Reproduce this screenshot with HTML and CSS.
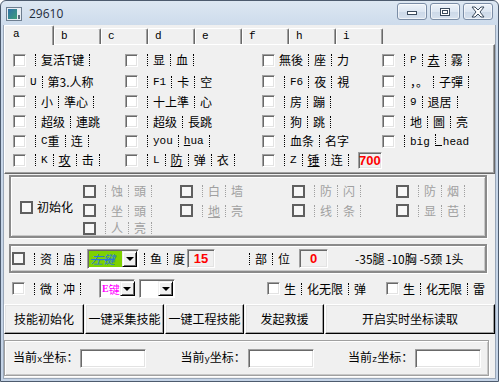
FILE: index.html
```html
<!DOCTYPE html>
<html>
<head>
<meta charset="utf-8">
<link rel="stylesheet" href="styles.css">
</head>
<body>
<div class="win">
  <div class="titlebar">
    <svg class="appicon" width="16" height="14" viewBox="0 0 16 14">
      <defs><linearGradient id="ig" x1="0" y1="0" x2="1" y2="1"><stop offset="0" stop-color="#2f6fa8"/><stop offset="1" stop-color="#3fa07a"/></linearGradient></defs>
      <rect x="0.5" y="0.5" width="15" height="13" fill="#e8eef4" stroke="#6d7d8f"/>
      <rect x="2" y="2" width="9" height="10" fill="url(#ig)"/>
      <rect x="12" y="8" width="2" height="4" fill="#5b6b7c"/>
    </svg>
    <span class="title">29610</span>
    <div class="ctrls">
      <div class="cb"><svg width="12" height="8" viewBox="0 0 12 8"><rect x="1.5" y="3.5" width="9" height="3" fill="#fff" stroke="#3b4a5c"/></svg></div>
      <div class="cb"><svg width="12" height="10" viewBox="0 0 12 10"><rect x="1.5" y="1.5" width="9" height="7" fill="#fff" stroke="#3b4a5c"/><rect x="3.5" y="3.5" width="5" height="3" fill="none" stroke="#3b4a5c"/></svg></div>
      <div class="cb"><svg width="16" height="12" viewBox="0 0 16 12"><path d="M2 1 H5 L8 4 L11 1 H14 L10 6 L14 11 H11 L8 8 L5 11 H2 L6 6 Z" fill="#fff" stroke="#3b4a5c" stroke-linejoin="round"/></svg></div>
    </div>
  </div>
  <div class="client">
    <div class="tabs">
      <div class="tab sel">a</div>
      <div class="tab">b</div>
      <div class="tab">c</div>
      <div class="tab">d</div>
      <div class="tab">e</div>
      <div class="tab">f</div>
      <div class="tab">h</div>
      <div class="tab">i</div>
    </div>
    <div class="panel">
      <div class="it"><span class="ck"></span><span class="lb"><span class="s"></span>复活T键<span class="s"></span></span></div>
      <div class="it"><span class="ck"></span><span class="lb"><span class="s"></span>显<span class="s"></span>血<span class="s"></span></span></div>
      <div class="it"><span class="ck"></span><span class="lb">無後<span class="s"></span>座<span class="s"></span>力</span></div>
      <div class="it"><span class="ck"></span><span class="lb"><span class="s"></span><span class="lt">P</span><span class="s"></span><u>去</u><span class="s"></span>霧<span class="s"></span></span></div>

      <div class="it"><span class="ck"></span><span class="lb"><span class="lt">U</span><span class="s"></span>第3.人称</span></div>
      <div class="it"><span class="ck"></span><span class="lb"><span class="s"></span><span class="lt">F1</span><span class="s"></span>卡<span class="s"></span>空</span></div>
      <div class="it"><span class="ck"></span><span class="lb"><span class="s"></span><span class="lt">F6</span><span class="s"></span>夜<span class="s"></span>視</span></div>
      <div class="it"><span class="ck"></span><span class="lb"><span class="s"></span>，。<span class="s"></span>子彈<span class="s"></span></span></div>

      <div class="it"><span class="ck"></span><span class="lb"><span class="s"></span>小<span class="s"></span>準心<span class="s"></span></span></div>
      <div class="it"><span class="ck"></span><span class="lb"><span class="s"></span>十上準<span class="s"></span>心</span></div>
      <div class="it"><span class="ck"></span><span class="lb"><span class="s"></span>房<span class="s"></span>蹦<span class="s"></span></span></div>
      <div class="it"><span class="ck"></span><span class="lb"><span class="s"></span><span class="lt">9</span><span class="s"></span>退居<span class="s"></span></span></div>

      <div class="it"><span class="ck"></span><span class="lb"><span class="s"></span>超级<span class="s"></span>連跳</span></div>
      <div class="it"><span class="ck"></span><span class="lb"><span class="s"></span>超级<span class="s"></span>長跳</span></div>
      <div class="it"><span class="ck"></span><span class="lb"><span class="s"></span>狗<span class="s"></span>跳<span class="s"></span></span></div>
      <div class="it"><span class="ck"></span><span class="lb"><span class="s"></span>地<span class="s"></span>圖<span class="s"></span>亮</span></div>

      <div class="it"><span class="ck"></span><span class="lb"><span class="s"></span><span class="lt">C</span>重<span class="s"></span>连<span class="s"></span></span></div>
      <div class="it"><span class="ck"></span><span class="lb"><span class="s"></span><span class="lt">you</span><span class="s"></span><span class="lt"><u>h</u>ua</span><span class="s"></span></span></div>
      <div class="it"><span class="ck"></span><span class="lb"><span class="s"></span>血条<span class="s"></span>名字</span></div>
      <div class="it"><span class="ck"></span><span class="lb"><span class="s"></span><span class="lt">big<span class="us"></span>head</span></span></div>

      <div class="it"><span class="ck"></span><span class="lb"><span class="s"></span><span class="lt">K</span><span class="s"></span><u>攻</u><span class="s"></span>击<span class="s"></span></span></div>
      <div class="it"><span class="ck"></span><span class="lb"><span class="s"></span><span class="lt">L</span><span class="s"></span><u>防</u><span class="s"></span>弹<span class="s"></span>衣<span class="s"></span></span></div>
      <div class="it"><span class="ck"></span><span class="lb"><span class="s"></span><span class="lt">Z</span><span class="s"></span><u>锤</u><span class="s"></span>连<span class="s"></span></span><span class="edit ro num w700">700</span></div>
      <div class="it"></div>
    </div>

    <div class="group g2">
      <div class="it init"><span class="ck thick"></span><span class="lb2">初始化</span></div>
      <div class="ggrid">
        <div class="it"><span class="ck thick"></span><span class="lb gray"><span class="s"></span>蚀<span class="s"></span>頭<span class="s"></span></span></div>
        <div class="it"><span class="ck thick"></span><span class="lb gray"><span class="s"></span>白<span class="s"></span>墙</span></div>
        <div class="it"><span class="ck thick"></span><span class="lb gray"><span class="s"></span>防<span class="s"></span>闪<span class="s"></span></span></div>
        <div class="it"><span class="ck thick"></span><span class="lb gray"><span class="s"></span>防<span class="s"></span>烟<span class="s"></span></span></div>
        <div class="it"><span class="ck thick"></span><span class="lb gray"><span class="s"></span>坐<span class="s"></span>頭<span class="s"></span></span></div>
        <div class="it"><span class="ck thick"></span><span class="lb gray"><span class="s"></span><u>地</u><span class="s"></span>亮</span></div>
        <div class="it"><span class="ck thick"></span><span class="lb gray"><span class="s"></span>线<span class="s"></span>条<span class="s"></span></span></div>
        <div class="it"><span class="ck thick"></span><span class="lb gray"><span class="s"></span>显<span class="s"></span>芭<span class="s"></span></span></div>
        <div class="it"><span class="ck thick"></span><span class="lb gray"><span class="s"></span>人<span class="s"></span>亮<span class="s"></span></span></div>
      </div>
    </div>

    <div class="group g3">
      <span class="ck thick"></span>
      <span class="lb"><span class="s"></span>资<span class="s"></span>庙<span class="s"></span></span>
      <span class="combo green"><span class="cv">左键</span><span class="dd"><i class="tri"></i></span></span>
      <span class="lb nopad"><span class="s"></span>鱼<span class="s"></span>度</span>
      <span class="edit ro num w15">15</span>
      <span class="lb nopad part"><span class="s"></span>部<span class="s"></span>位</span>
      <span class="edit ro num w0">0</span>
      <span class="hint">-35腿 -10胸 -5颈 1头</span>
    </div>

    <div class="row4">
      <span class="ck"></span>
      <span class="lb"><span class="s"></span>微<span class="s"></span>冲<span class="s"></span></span>
      <span class="combo ekey"><span class="cv"><b class="ek">E</b>键</span><span class="dd"><i class="tri"></i></span></span>
      <span class="combo blank"><span class="cv"></span><span class="dd"><i class="tri"></i></span></span>
      <span class="ck sh1"></span>
      <span class="lb">生<span class="s"></span>化无限<span class="s"></span>弹</span>
      <span class="ck sh2"></span>
      <span class="lb">生<span class="s"></span>化无限<span class="s"></span>雷</span>
    </div>

    <div class="buttons">
      <div class="btn b1">技能初始化</div>
      <div class="btn b2">一键采集技能</div>
      <div class="btn b3">一键工程技能</div>
      <div class="btn b4">发起救援</div>
      <div class="btn b5">开启实时坐标读取</div>
    </div>

    <div class="group g5">
      <span class="cl">当前<small>x</small>坐标：</span><span class="edit coord"></span>
      <span class="cl cy">当前<small>y</small>坐标：</span><span class="edit coord"></span>
      <span class="cl cz">当前<small>z</small>坐标：</span><span class="edit coord"></span>
    </div>
  </div>
</div>
</body>
</html>
```

FILE: styles.css
```css
* { box-sizing: border-box; }
html, body { margin: 0; padding: 0; }
body {
  width: 499px; height: 382px; overflow: hidden;
  font: 12px/14px "Noto Sans CJK SC", sans-serif;
  color: #000;
  background: #fff;
}
.win {
  width: 499px; height: 382px;
  border: 1px solid #4d5b6e;
  border-radius: 6px 6px 0 0;
  background: linear-gradient(#dde7f2, #c9d8ea 30px, #c4d3e6);
  padding: 0 2px 2px 2px;
  display: flex; flex-direction: column;
}
.titlebar {
  height: 24px;
  display: flex; align-items: center;
  padding-left: 3px;
}
.appicon { margin-top: 1px; }
.title {
  font: 12px "Open Sans", "Noto Sans", sans-serif;
  color: #1e2b3c;
  margin-left: 7px;
  margin-top: 1px;
}
.ctrls { margin-left: auto; display: flex; gap: 3px; margin-right: 3px; margin-top: -3px; }
.cb {
  width: 30px; height: 17px;
  border: 1px solid #7b8da6;
  border-radius: 3px;
  background: linear-gradient(#eef3f9, #dce6f2 50%, #cbd8e8 51%, #d6e1ee);
  box-shadow: inset 0 0 0 1px rgba(255,255,255,0.6);
  display: flex; align-items: center; justify-content: center;
}
.client {
  flex: 1;
  background: #f0f0f0;
  border: 1px solid #9aa7b8;
  border-top: none;
  display: flex; flex-direction: column;
}
.tabs { display: flex; height: 19px; align-items: flex-end; position: relative; z-index: 1; }
.tab {
  width: 47px; height: 16px;
  font: 11px/15px "Liberation Mono", monospace;
  padding-left: 6px;
  background: #f0f0f0;
  border-top: 1px solid #fff;
  border-left: 1px solid #fff;
  border-right: 1px solid #696969;
  box-shadow: inset -1px 0 0 #a0a0a0;
  border-radius: 2px 2px 0 0;
}
.tab.sel {
  width: 50px; height: 20px;
  margin-bottom: -1px;
  padding-left: 8px;
  line-height: 17px;
}
.panel {
  height: 130px;
  border-top: 1px solid #fff;
  border-left: 1px solid #fff;
  border-right: 1px solid #696969;
  border-bottom: 1px solid #696969;
  box-shadow: inset -1px -1px 0 #a0a0a0;
  padding: 4px 0 0 8px;
  display: grid;
  grid-template-columns: 112px 137px 120px 1fr;
  grid-template-rows: 22px 21px 19px 21px 18px 20px;
}
.it { display: flex; align-items: center; white-space: nowrap; }
.ck {
  flex: none;
  display: inline-block;
  width: 13px; height: 13px;
  background: #fff;
  border-top: 1px solid #a0a0a0;
  border-left: 1px solid #a0a0a0;
  border-right: 1px solid #fff;
  border-bottom: 1px solid #fff;
  box-shadow: inset 1px 1px 0 #696969, inset -1px -1px 0 #e3e3e3;
}
.ck.thick {
  border: 2px solid #5f5f5f;
  box-shadow: none;
  background: #f7f7f7;
}
.lb { display: inline-flex; align-items: center; margin-left: 4px; white-space: nowrap; }
.lb.nopad { margin-left: 0; }
.s {
  display: inline-block;
  width: 1px; height: 12px;
  border-left: 1px dotted #000;
  margin: 0 5px;
}
.lt { font-family: "Liberation Mono", monospace; font-size: 11px; }
.us {
  display: inline-block; width: 7px; height: 12px;
  border-left: 1px dotted #000;
  border-bottom: 1px solid #000;
  margin: 0 1px 0 5px;
  position: relative; top: 1px;
}
u { text-decoration-thickness: 1px; text-underline-offset: 1px; }
.gray { color: #a0a0a0; }
.gray .s { border-left-color: #a0a0a0; }
.edit {
  display: inline-flex; align-items: center; justify-content: center;
  border-top: 1px solid #a0a0a0;
  border-left: 1px solid #a0a0a0;
  border-right: 1px solid #fff;
  border-bottom: 1px solid #fff;
  box-shadow: inset 1px 1px 0 #696969, inset -1px -1px 0 #e3e3e3;
  background: #fff;
}
.edit.ro { background: #f0f0f0; }
.num { color: #f00; font: bold 13px/1 "Liberation Sans", sans-serif; }
.w700 { width: 30px; height: 17px; margin-left: 4px; }
.group {
  border: 1px solid #a0a0a0;
  box-shadow: inset 1px 1px 0 #fff, 1px 1px 0 #fff, inset -1px -1px 0 #c8c8c8;
}
.g2 {
  margin: 1px 8px 0 5px;
  height: 63px;
  display: flex; align-items: center;
  border-width: 2px;
  border-color: #8a8a8a;
  padding-left: 9px;
}
.init { width: 63px; align-self: center; margin-top: 1px; }
.lb2 { margin-left: 4px; }
.ggrid {
  align-self: flex-start;
  padding-top: 4px;
  display: grid;
  grid-template-columns: 97px 112px 104px 1fr;
  grid-template-rows: 20px 19px 16px;
  flex: 1;
}
.g3 {
  margin: 6px 8px 0 5px;
  height: 29px;
  display: flex; align-items: center;
  border-width: 2px;
  border-color: #8a8a8a;
  padding-left: 1px;
}
.combo {
  display: inline-flex;
  height: 20px;
  border-top: 1px solid #a0a0a0;
  border-left: 1px solid #a0a0a0;
  border-right: 1px solid #fff;
  border-bottom: 1px solid #fff;
  box-shadow: inset 1px 1px 0 #696969;
  padding: 1px;
  background: #fff;
  flex: none;
}
.cv { flex: 1; display: flex; align-items: center; padding-left: 2px; white-space: nowrap; overflow: hidden; }
.dd {
  width: 15px; flex: none;
  background: #f0f0f0;
  border-top: 1px solid #f0f0f0;
  border-left: 1px solid #f0f0f0;
  border-right: 1px solid #000;
  border-bottom: 1px solid #000;
  box-shadow: inset 1px 1px 0 #fff, inset -1px -1px 0 #696969;
  display: flex; align-items: center; justify-content: center;
}
.tri {
  display: block; width: 0; height: 0;
  border-left: 4px solid transparent;
  border-right: 4px solid transparent;
  border-top: 4px solid #000;
  margin-top: 1px;
}
.combo.green { width: 52px; margin-left: 1px; }
.combo.green .cv {
  background: #7ed200;
  color: #2a78d6;
  font-style: italic;
  text-decoration: line-through;
  text-decoration-color: #2a78d6;
}
.w15 { width: 28px; height: 19px; margin-left: 2px; }
.lb.part { margin-left: 29px; }
.w0 { width: 29px; height: 19px; margin-left: 9px; }
.hint { margin-left: 27px; white-space: nowrap; }
.row4 {
  height: 31px;
  display: flex; align-items: center;
  padding-left: 8px;
}
.combo.ekey { width: 36px; height: 19px; margin-left: 13px; padding: 1px 0 1px 1px; }
.combo.ekey .cv {
  color: #ff00ff; font-size: 11px; padding-left: 1px; overflow: visible;
}
.ek { font: bold 10px "Liberation Serif", serif; margin-right: 0; }
.combo.blank { width: 36px; height: 19px; margin-left: 4px; }
.ck.sh1 { margin-left: 92px; }
.ck.sh2 { margin-left: 20px; }
.buttons {
  display: flex; gap: 1px;
  height: 30px;
}
.btn {
  display: flex; align-items: center; justify-content: center;
  background: #f0f0f0;
  border-top: 1px solid #fff;
  border-left: 1px solid #fff;
  border-right: 1px solid #000;
  border-bottom: 1px solid #000;
  box-shadow: inset -1px -1px 0 #a0a0a0, inset 1px 1px 0 #e3e3e3;
  white-space: nowrap;
}
.b1 { width: 80px; }
.b2, .b3, .b4 { width: 79px; }
.b5 { flex: 1; }
.g5 {
  margin: 6px 6px 0 0;
  height: 36px;
  display: flex; align-items: center;
  padding-left: 8px;
}
.cl { white-space: nowrap; }
.cl small { font-family: "Liberation Mono", monospace; font-size: 9px; }
.edit.coord { width: 66px; height: 19px; margin-left: 2px; }
.cy { margin-left: 34px; }
.cz { margin-left: 34px; }
```
